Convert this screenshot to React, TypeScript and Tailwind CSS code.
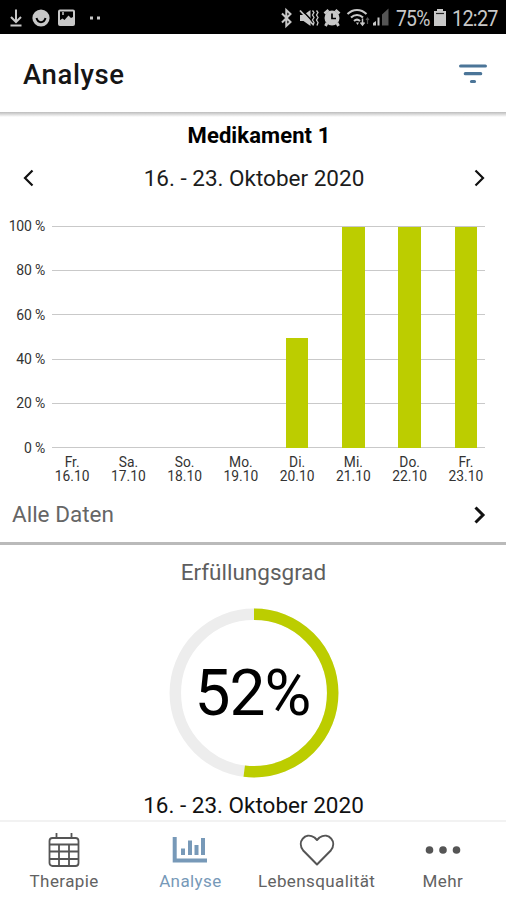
import type { ReactNode } from "react";

const days = [
  { day: "Fr.", date: "16.10", value: 0 },
  { day: "Sa.", date: "17.10", value: 0 },
  { day: "So.", date: "18.10", value: 0 },
  { day: "Mo.", date: "19.10", value: 0 },
  { day: "Di.", date: "20.10", value: 50 },
  { day: "Mi.", date: "21.10", value: 100 },
  { day: "Do.", date: "22.10", value: 100 },
  { day: "Fr.", date: "23.10", value: 100 },
];

const ticks = [100, 80, 60, 40, 20, 0];

function StatusBar() {
  return (
    <div className="flex h-[34px] shrink-0 items-center justify-between bg-black pr-[8px] pl-[9px] text-[#c8c8c8]">
      <svg width="96" height="34" viewBox="0 0 96 34" fill="none" stroke="currentColor" strokeWidth="2">
        <path d="M7 9.500V22M2 17l5 5 5-5M1.500 25.500h11" />
        <circle cx="32" cy="18" r="8.600" fill="currentColor" stroke="none" />
        <path d="M27.500 18c1.500 5.500 7.500 5.500 9 0" stroke="#000" />
        <rect x="50" y="10.500" width="15" height="14.500" rx="1" />
        <path d="M50.500 24.500v-4l3-2 2 1.500 4-4.500 2.500 2.500 3-1.500v8z" fill="currentColor" stroke="none" />
        <path d="M54 12v3" strokeWidth="1.500" />
        <path d="M81 18h3M88 18h3" strokeWidth="3" />
      </svg>
      <div className="flex items-center">
        <svg width="110" height="34" viewBox="0 0 110 34" fill="none" stroke="currentColor" strokeWidth="2">
          {/* bluetooth */}
          <path d="M2 13.500l8.500 8.500-4.200 4V10l4.200 4L2 22.500" strokeWidth="2" />
          {/* muted / vibrate */}
          <path d="M20 15h3.500l7-5v16l-7-5H20z" fill="currentColor" stroke="none" />
          <path d="M21.500 9.500l13 14" stroke="#000" strokeWidth="1.500" />
          <path d="M20 10.500l13 14" strokeWidth="1.800" />
          <path d="M32.500 10.500l1.500 2-1.500 2.500 1.500 2.500-1.500 2.500 1.500 2.500-1 3M36.500 10.500l1.500 2-1.500 2.500 1.500 2.500-1.500 2.500 1.500 2.500-1 3" strokeWidth="1.300" />
          {/* alarm */}
          <circle cx="52" cy="18" r="7.500" fill="currentColor" stroke="none" />
          <path d="M44.500 13.500l4-3.500M59.500 13.500l-4-3.500M47 23l-1.500 3M57 23l1.500 3" strokeWidth="2.800" />
          <path d="M52 13.500V18.500h4" stroke="#000" strokeWidth="1.700" />
          {/* wifi */}
          <path d="M67.500 14c5.500-5.500 13.500-5.500 19 0M71 17.500c3.500-3.500 8.500-3.500 12 0M74 21c2-1.800 4-1.800 6 0" />
          <path d="M76 22.500h3l-1.500 2.500z" fill="currentColor" stroke="none" />
          <path d="M82.500 18.500v6M80.500 22.500l2 2.500 2-2.500" strokeWidth="1.500" />
          <path d="M87.500 24v-6M86 20l1.500-2 1.500 2" stroke="#555" strokeWidth="1.200" />
          {/* signal */}
          <path d="M93 25.500v-2.500l3-2v4.500z" fill="currentColor" stroke="none" />
          <path d="M98.500 25.500v-8" strokeWidth="2" />
          <path d="M102 25.500V14.500l6.500-6v17z" fill="#555" stroke="none" />
        </svg>
        <span className="ml-[6px] w-[35px] origin-left scale-x-88 pt-[3px] text-[22px] leading-none tracking-[-0.900px] whitespace-nowrap">75%</span>
        <svg className="ml-[3px]" width="12" height="34" viewBox="0 0 12 34" fill="currentColor">
          <path d="M3 9h6v2h3v15H0V11h3z" />
          <path d="M2 13.500h8" stroke="#222" strokeWidth="1.200" />
        </svg>
        <span className="ml-[6px] w-[46px] origin-left scale-x-90 pt-[3px] text-[22px] leading-none tracking-[-0.800px] whitespace-nowrap">12:27</span>
      </div>
    </div>
  );
}

function Header() {
  return (
    <header className="flex h-[78px] shrink-0 items-center justify-between bg-white pt-[2px] pr-[19px] pl-[23px]">
      <h1 className="pt-[2px] text-[27.500px] leading-8 font-medium tracking-[0.600px] text-[#151515]">Analyse</h1>
      <svg width="28" height="24" viewBox="0 0 28 24" fill="none" stroke="#4b7598" strokeWidth="3.200" strokeLinecap="round">
        <path d="M1.600 4h24.800M6.300 11.700h15.400M12.500 19.500h3" />
      </svg>
    </header>
  );
}

function Chevron({ left = false, bold = false }: { left?: boolean; bold?: boolean }) {
  return (
    <svg
      width="12"
      height="18"
      viewBox="0 0 12 18"
      fill="none"
      stroke="#111"
      strokeWidth={bold ? 3 : 2.2}
      className={left ? "rotate-180" : ""}
    >
      <path d="M1.500 1.500L9 9l-7.500 7.500" />
    </svg>
  );
}

function BarChart() {
  return (
    <div className="relative h-[280px] w-full shrink-0 text-[#333]">
      <div className="-mt-[3px] flex flex-col">
        {ticks.map((tick) => (
          <div key={tick} className="flex h-[44.300px] items-center pr-[21px]">
            <span className="w-[45px] text-right text-[14px] leading-none tracking-[-0.200px] whitespace-nowrap">{tick} %</span>
            <span className="ml-[7px] flex-1 border-t border-[#c9c9c9]" />
          </div>
        ))}
      </div>
      {/* bars and labels lie over the grid */}
      <div className="absolute top-[20px] left-[44px] grid w-[450px] grid-cols-8">
        {days.map((d) => (
          <div key={d.date} className="flex flex-col items-center">
            <div className="flex h-[221px] items-end">
              <div className="w-[22.500px] bg-[#bccd00]" style={{ height: `${d.value}%` }} />
            </div>
            <p className="mt-[7px] text-center text-[13.800px] leading-[14px]">
              {d.day}
              <br />
              {d.date}
            </p>
          </div>
        ))}
      </div>
    </div>
  );
}

function Ring({ percent }: { percent: number }) {
  return (
    <div className="relative mt-[22px] ml-[1px] flex h-[170px] w-[170px] items-center justify-center">
      <svg className="absolute inset-0" width="170" height="170" viewBox="0 0 170 170" fill="none" strokeWidth="11.500">
        <circle cx="85" cy="85" r="78.700" stroke="#ededed" />
        <circle
          cx="85"
          cy="85"
          r="78.700"
          stroke="#bccd00"
          pathLength="100"
          strokeDasharray={`${percent} 100`}
          transform="rotate(-90 85 85)"
        />
      </svg>
      <span className="relative pt-[2px] pr-[2px] text-[64px] leading-none tracking-[-0.900px] text-black">{percent}%</span>
    </div>
  );
}

function NavItem({ label, className, children }: { label: string; className: string; children: ReactNode }) {
  return (
    <a href="#" className={`flex flex-col items-center ${className}`}>
      <span className="flex h-[40px] items-center">{children}</span>
      <span className="mt-[1px] text-[17px] leading-[20px] tracking-[0.400px] whitespace-nowrap">{label}</span>
    </a>
  );
}

function BottomNav() {
  return (
    <nav className="grid h-[80px] shrink-0 grid-cols-4 border-t-2 border-[#f2f2f2] bg-white pt-[8px] pl-[1px] text-[#626262]">
      <NavItem label="Therapie" className="">
        <svg width="32" height="36" viewBox="0 0 32 36" fill="none" stroke="#555" strokeWidth="1.800">
          <rect x="1.500" y="6" width="29" height="28" rx="3" />
          <path d="M8.500 1v5M23.500 1v5M1.500 12.500h29M1.500 19.500h29M1.500 27h29M11 12.500V34M21 12.500V34" />
        </svg>
      </NavItem>
      <NavItem label="Analyse" className="text-[#7799b8]">
        <svg width="36" height="28" viewBox="0 0 36 28" fill="none" stroke="currentColor" strokeWidth="4">
          <path d="M2.700 1v23.500H35M11 19v-6.500M18 19V4.500M24.500 19V9M31 19V2" />
        </svg>
      </NavItem>
      <NavItem label="Lebensqualität" className="">
        <svg width="36" height="32" viewBox="0 0 36 32" fill="none" stroke="#555" strokeWidth="2" strokeLinejoin="round">
          <path d="M18 30.500L4.200 16.500C-2.500 8 6-2.500 15.500 3.500L18 6l2.500-2.500C30-2.500 38.500 8 31.800 16.500z" />
        </svg>
      </NavItem>
      <NavItem label="Mehr" className="">
        <svg width="36" height="10" viewBox="0 0 36 10" fill="#555">
          <circle cx="4.500" cy="5" r="3.800" />
          <circle cx="18" cy="5" r="3.800" />
          <circle cx="31.500" cy="5" r="3.800" />
        </svg>
      </NavItem>
    </nav>
  );
}

export default function App() {
  return (
    <div className="flex h-[900px] w-[506px] flex-col overflow-hidden bg-white font-[Roboto,sans-serif]">
      <StatusBar />
      <Header />
      <div className="h-[5px] shrink-0 bg-gradient-to-b from-[#bcbcbc] to-white" />
      <h2 className="mt-[5px] pl-[12px] text-center text-[22px] leading-[27px] font-bold tracking-[0.100px] text-black">Medikament 1</h2>
      <div className="flex h-[58px] shrink-0 items-center justify-between pr-[20px] pl-[22px]">
        <Chevron left />
        <span className="text-[22.500px] leading-none text-[#1c1c1c]">16. - 23. Oktober 2020</span>
        <Chevron />
      </div>
      <BarChart />
      <div className="flex h-[55px] shrink-0 items-center justify-between pr-[20px] pl-[12px]">
        <span className="text-[22.500px] leading-none text-[#666]">Alle Daten</span>
        <Chevron bold />
      </div>
      <div className="h-[3px] shrink-0 bg-[#bababa]" />
      <section className="flex flex-1 flex-col items-center pt-[14px]">
        <h3 className="pl-[1px] text-[22.500px] leading-[27px] text-[#5e5e5e]">Erfüllungsgrad</h3>
        <Ring percent={52} />
        <span className="mt-[14px] pl-[1px] text-[22.500px] leading-[27px] text-[#111]">16. - 23. Oktober 2020</span>
      </section>
      <BottomNav />
    </div>
  );
}
